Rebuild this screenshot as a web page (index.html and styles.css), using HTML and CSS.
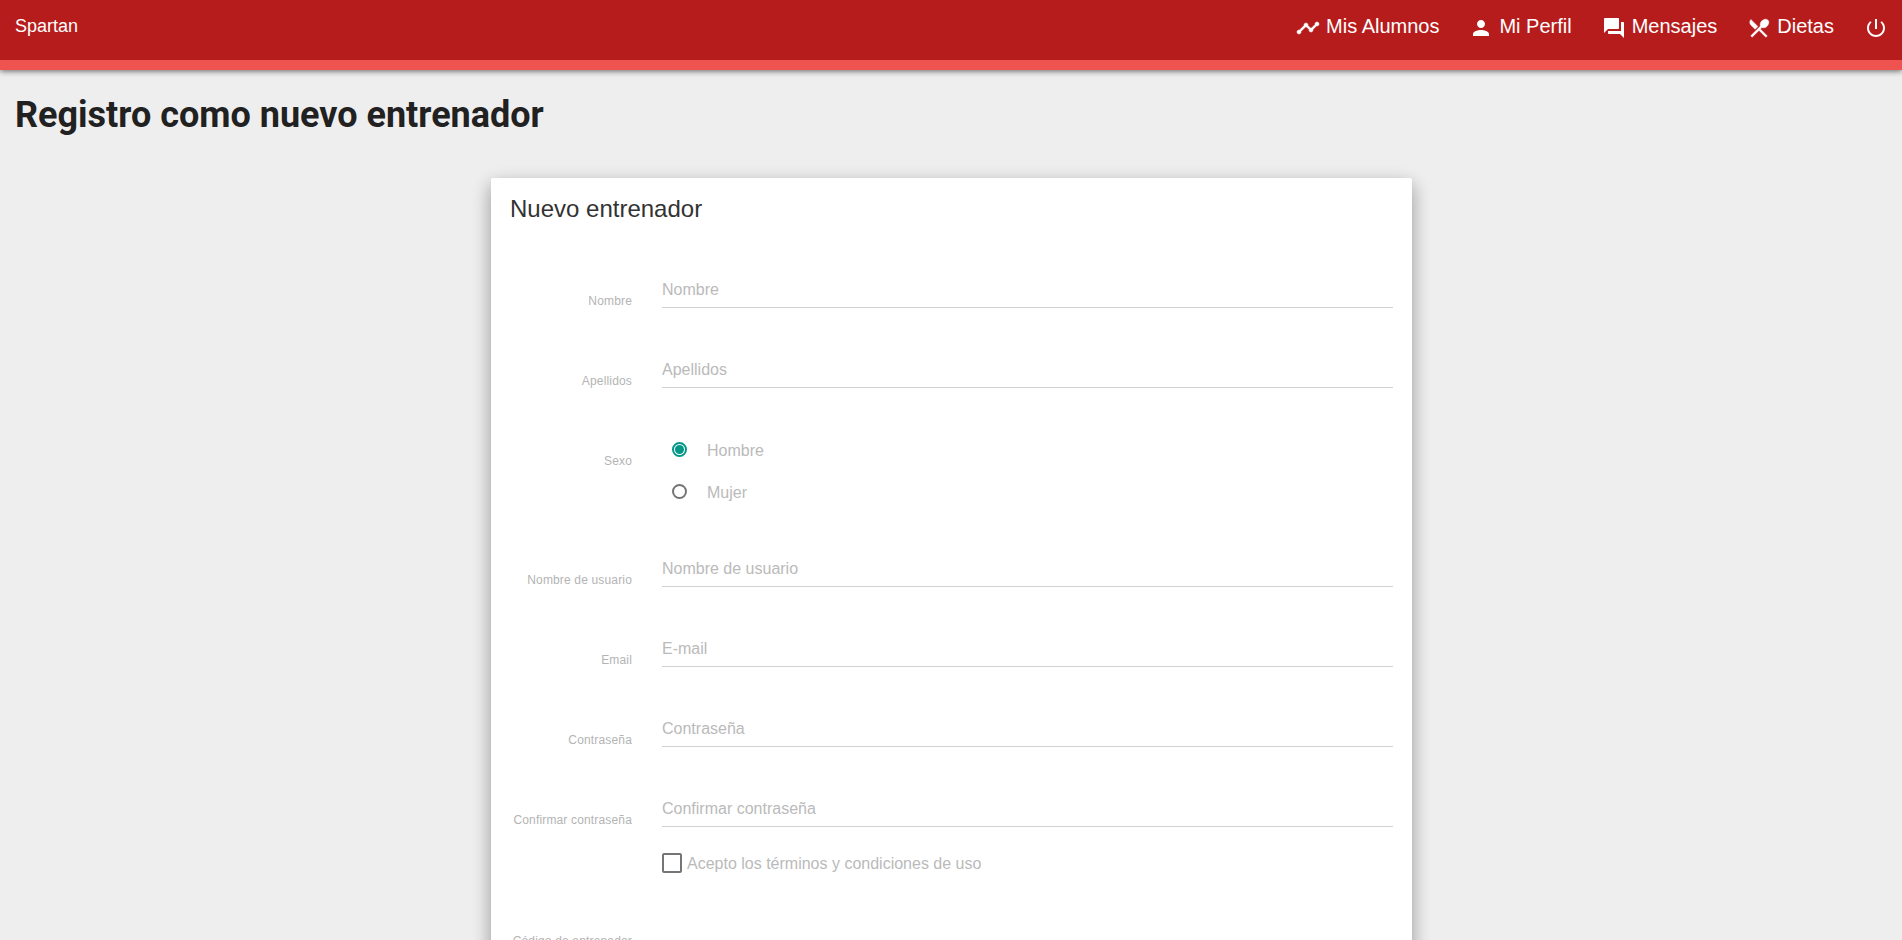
FILE: index.html
```html
<!DOCTYPE html>
<html lang="es">
<head>
<meta charset="utf-8">
<title>Spartan</title>
<link rel="stylesheet" href="styles.css">
</head>
<body>
<header class="navbar">
  <a class="brand">Spartan</a>
  <nav class="menu">
    <a class="item"><svg class="icon" viewBox="0 0 24 24"><path stroke="currentColor" stroke-width=".5" d="M23 8c0 1.1-.9 2-2 2-.18 0-.35-.02-.51-.07l-3.56 3.55c.05.16.07.34.07.52 0 1.1-.9 2-2 2s-2-.9-2-2c0-.18.02-.36.07-.52l-2.55-2.55c-.16.05-.34.07-.52.07s-.36-.02-.52-.07l-4.55 4.56c.05.16.07.33.07.51 0 1.1-.9 2-2 2s-2-.9-2-2 .9-2 2-2c.18 0 .35.02.51.07l4.56-4.55C8.02 9.36 8 9.18 8 9c0-1.1.9-2 2-2s2 .9 2 2c0 .18-.02.36-.07.52l2.55 2.55c.16-.05.34-.07.52-.07s.36.02.52.07l3.55-3.56C19.02 8.35 19 8.18 19 8c0-1.1.9-2 2-2s2 .9 2 2z"/></svg><span>Mis Alumnos</span></a>
    <a class="item"><svg class="icon" viewBox="0 0 24 24"><path d="M12 12c2.21 0 4-1.79 4-4s-1.79-4-4-4-4 1.79-4 4 1.79 4 4 4zm0 2c-2.67 0-8 1.34-8 4v2h16v-2c0-2.66-5.33-4-8-4z"/></svg><span>Mi Perfil</span></a>
    <a class="item"><svg class="icon" viewBox="0 0 24 24"><path d="M21 6h-2v9H6v2c0 .55.45 1 1 1h11l4 4V7c0-.55-.45-1-1-1zm-4 6V3c0-.55-.45-1-1-1H3c-.55 0-1 .45-1 1v14l4-4h10c.55 0 1-.45 1-1z"/></svg><span>Mensajes</span></a>
    <a class="item"><svg class="icon" viewBox="0 0 24 24"><path stroke="currentColor" stroke-width=".4" d="M8.1 13.34l2.83-2.83L3.91 3.5c-1.56 1.56-1.56 4.09 0 5.66l4.19 4.18zm6.78-1.81c1.53.71 3.68.21 5.27-1.38 1.91-1.91 2.28-4.65.81-6.12-1.46-1.46-4.2-1.1-6.12.81-1.59 1.59-2.09 3.74-1.38 5.27L3.7 19.87l1.41 1.41L12 14.41l6.88 6.88 1.41-1.41L13.41 13l1.47-1.47z"/></svg><span>Dietas</span></a>
    <a class="item"><svg class="icon" viewBox="0 0 24 24"><path d="M13 3h-2v10h2V3zm4.83 2.17l-1.42 1.42C17.99 7.86 19 9.81 19 12c0 3.87-3.13 7-7 7s-7-3.13-7-7c0-2.19 1.01-4.14 2.58-5.42L6.17 5.17C4.23 6.82 3 9.26 3 12c0 4.97 4.03 9 9 9s9-4.03 9-9c0-2.74-1.23-5.18-3.17-6.83z"/></svg></a>
  </nav>
</header>
<main>
  <h1 class="page-title">Registro como nuevo entrenador</h1>
  <form class="card">
    <h2 class="card-title">Nuevo entrenador</h2>
    <div class="row"><label class="label">Nombre</label><input class="field" type="text" placeholder="Nombre"></div>
    <div class="row"><label class="label">Apellidos</label><input class="field" type="text" placeholder="Apellidos"></div>
    <div class="row row-options">
      <label class="label">Sexo</label>
      <div class="options">
        <label class="option"><span class="radio radio-on"></span><span>Hombre</span></label>
        <label class="option"><span class="radio"></span><span>Mujer</span></label>
      </div>
    </div>
    <div class="row"><label class="label">Nombre de usuario</label><input class="field" type="text" placeholder="Nombre de usuario"></div>
    <div class="row"><label class="label">Email</label><input class="field" type="text" placeholder="E-mail"></div>
    <div class="row"><label class="label">Contraseña</label><input class="field" type="password" placeholder="Contraseña"></div>
    <div class="row row-last"><label class="label">Confirmar contraseña</label><input class="field" type="password" placeholder="Confirmar contraseña"></div>
    <label class="terms"><span class="checkbox"></span><span>Acepto los términos y condiciones de uso</span></label>
    <div class="row"><label class="label">Código de entrenador</label></div>
  </form>
</main>
</body>
</html>
```
FILE: styles.css
```css
* { box-sizing: border-box; }
body {
  margin: 0;
  height: 940px;
  overflow: hidden;
  background: #eee;
  font-family: "Liberation Sans", Arial, sans-serif;
}
.navbar {
  display: flex;
  justify-content: space-between;
  height: 70px;
  padding: 0 14px 0 15px;
  background: #b71c1c;
  border-bottom: 10px solid #ef5350;
  box-shadow: 0 1px 6px rgba(0, 0, 0, .6);
  color: #fff;
}
.brand { padding-top: 16px; font-size: 18px; line-height: 20px; }
.menu { display: flex; gap: 30px; padding-top: 14px; }
.item { display: flex; gap: 6px; font-size: 20px; line-height: 24px; }
.icon { width: 24px; height: 24px; margin-top: 2px; fill: currentColor; }
.page-title {
  margin: 25px 15px 0;
  height: 83px;
  font: 700 36px/40px Roboto, sans-serif;
  color: #212121;
}
.card {
  width: 921px;
  height: 900px;
  margin: 0 0 0 491px;
  padding: 19px 19px 0;
  background: #fff;
  border-radius: 2px;
  box-shadow: 0 8px 17px rgba(0, 0, 0, .2), 0 6px 20px rgba(0, 0, 0, .19);
}
.card-title {
  margin: 0;
  height: 73px;
  font-size: 24px;
  font-weight: 400;
  line-height: 24px;
  color: #333;
}
.row { display: flex; gap: 30px; height: 80px; }
.row-options { height: 119px; }
.row-last { height: 49px; }
.label {
  width: 122px;
  padding-top: 24px;
  text-align: right;
  white-space: nowrap;
  font-size: 12px;
  line-height: 14px;
  letter-spacing: .16px;
  color: #b4b4b4;
}
.field {
  flex: 1;
  height: 38px;
  padding: 2px 0 0;
  border: 0;
  border-bottom: 1px solid #d2d2d2;
  outline: 0;
  background: transparent;
  font: 16px "Liberation Sans", Arial, sans-serif;
}
.field::placeholder { color: #bababa; opacity: 1; }
.options { padding: 11px 0 0 10px; }
.option {
  display: flex;
  align-items: center;
  gap: 20px;
  height: 42px;
  padding-bottom: 22px;
  font-size: 16px;
  line-height: 20px;
  color: #bababa;
}
.radio {
  display: grid;
  place-items: center;
  width: 15px;
  height: 15px;
  margin-bottom: 3px;
  border: 2px solid #757575;
  border-radius: 50%;
}
.radio-on { border-color: #009688; }
.radio-on::after {
  content: "";
  width: 9px;
  height: 9px;
  border-radius: 50%;
  background: #009688;
}
.terms {
  display: flex;
  gap: 5px;
  height: 72px;
  padding: 15px 0 0 152px;
  font-size: 16px;
  line-height: 21px;
  color: #bababa;
}
.checkbox { width: 20px; height: 20px; border: 2px solid #757575; border-radius: 2px; }
```
